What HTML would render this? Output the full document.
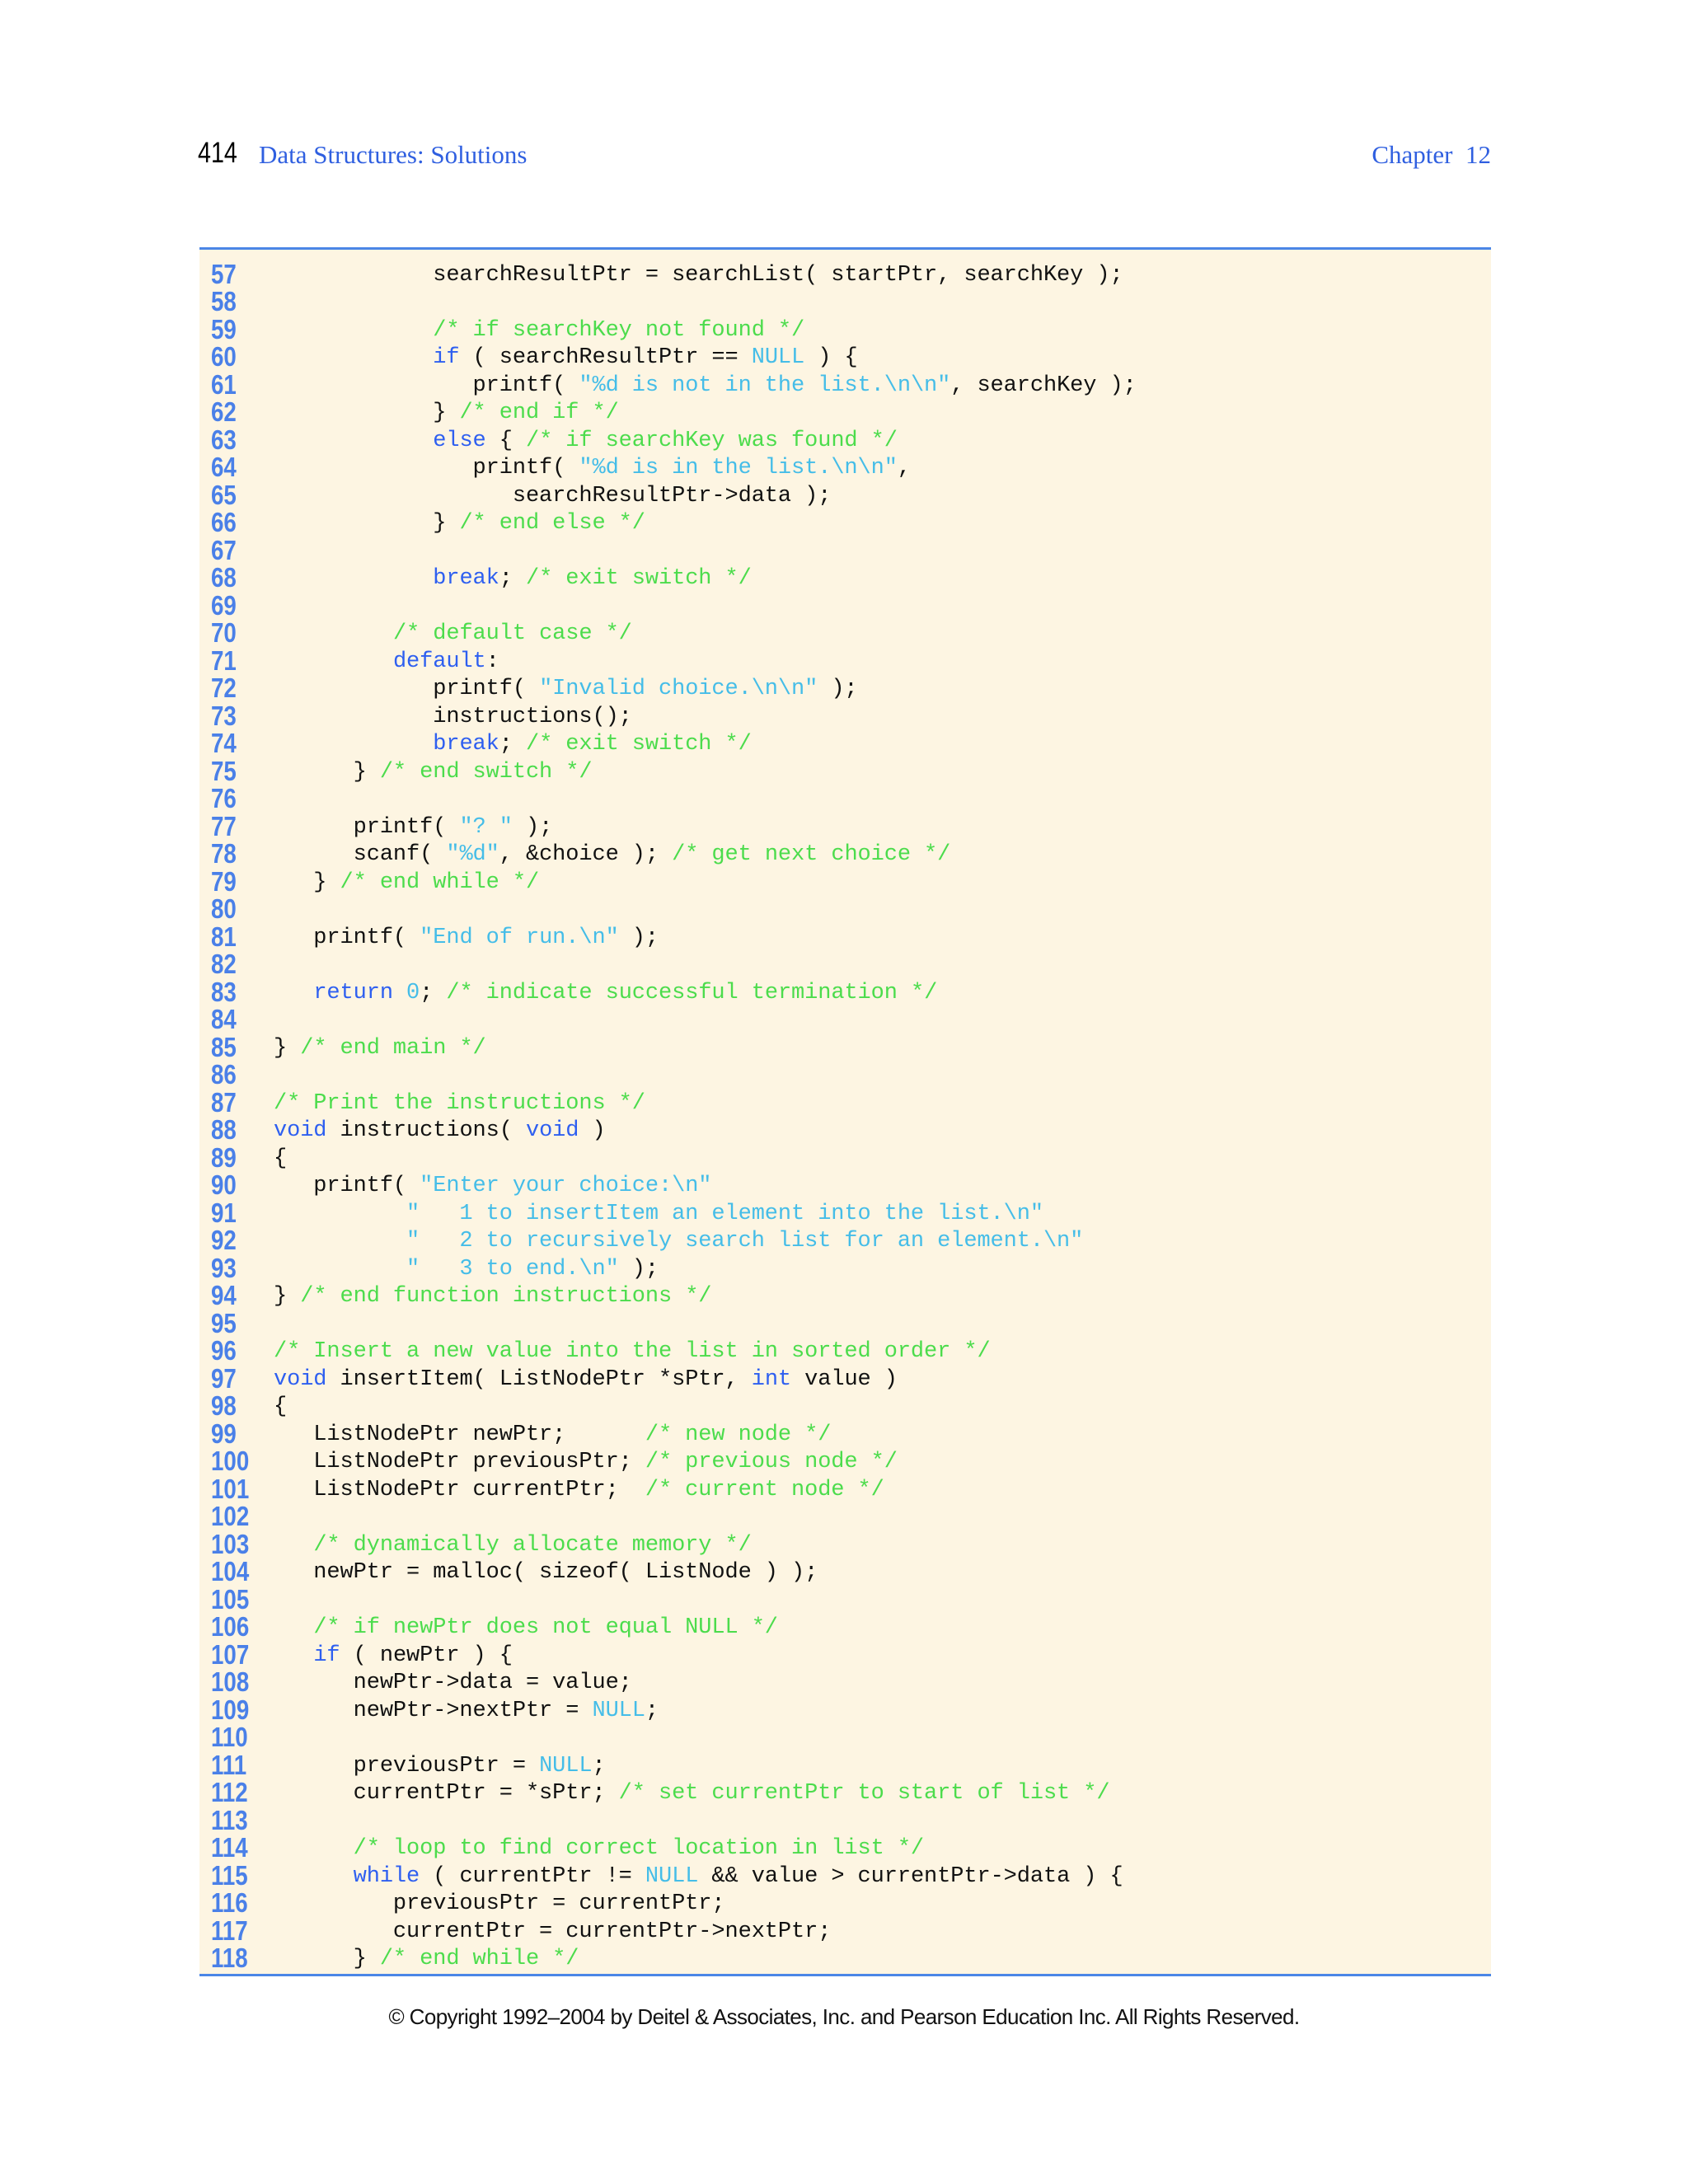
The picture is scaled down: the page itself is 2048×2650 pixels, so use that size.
<!DOCTYPE html>
<html><head><meta charset="utf-8"><style>
body{margin:0;width:2048px;height:2650px;background:#fff;position:relative;overflow:hidden}
.hdr{position:absolute;top:170px;font-family:"Liberation Serif",serif;font-size:31px;color:#2f5fe0}
.pn{position:absolute;left:240px;top:166px;font-family:"Liberation Sans",sans-serif;font-size:35px;color:#000;transform:scaleX(0.82);transform-origin:left}
.box{position:absolute;left:242px;top:300px;width:1567px;height:2098px;background:#fdf5e2;border-top:3px solid #4b86e6;border-bottom:3px solid #4b86e6;box-sizing:border-box}
.ln{position:absolute;left:256px;font-family:"Liberation Sans",sans-serif;font-weight:bold;font-size:33px;color:#4a80e8;transform:scaleX(0.84);transform-origin:left;line-height:33.5px}
.cd{position:absolute;left:332px;font-family:"Liberation Mono",monospace;font-size:27px;letter-spacing:-0.1px;white-space:pre;color:#111;line-height:33.5px}
.k{color:#2e5ff0}.s{color:#45bde8}.c{color:#4cdc4c}
.ft{position:absolute;top:2432px;left:0;width:2048px;text-align:center;font-family:"Liberation Sans",sans-serif;font-size:26px;color:#111;letter-spacing:-0.6px}
</style></head><body>
<div class="pn">414</div>
<div class="hdr" style="left:314px">Data Structures: Solutions</div>
<div class="hdr" style="right:239px">Chapter&nbsp; 12</div>
<div class="box"></div>
<div id="L"></div>
<div class="ft">© Copyright 1992–2004 by Deitel &amp; Associates, Inc. and Pearson Education Inc. All Rights Reserved.</div>
<script>
const lines=[
`            searchResultPtr = searchList( startPtr, searchKey );`,
``,
`            <c>/* if searchKey not found */</c>`,
`            <k>if</k> ( searchResultPtr == <s>NULL</s> ) {`,
`               printf( <s>"%d is not in the list.\\n\\n"</s>, searchKey );`,
`            } <c>/* end if */</c>`,
`            <k>else</k> { <c>/* if searchKey was found */</c>`,
`               printf( <s>"%d is in the list.\\n\\n"</s>,`,
`                  searchResultPtr->data );`,
`            } <c>/* end else */</c>`,
``,
`            <k>break</k>; <c>/* exit switch */</c>`,
``,
`         <c>/* default case */</c>`,
`         <k>default</k>:`,
`            printf( <s>"Invalid choice.\\n\\n"</s> );`,
`            instructions();`,
`            <k>break</k>; <c>/* exit switch */</c>`,
`      } <c>/* end switch */</c>`,
``,
`      printf( <s>"? "</s> );`,
`      scanf( <s>"%d"</s>, &amp;choice ); <c>/* get next choice */</c>`,
`   } <c>/* end while */</c>`,
``,
`   printf( <s>"End of run.\\n"</s> );`,
``,
`   <k>return</k> <s>0</s>; <c>/* indicate successful termination */</c>`,
``,
`} <c>/* end main */</c>`,
``,
`<c>/* Print the instructions */</c>`,
`<k>void</k> instructions( <k>void</k> )`,
`{`,
`   printf( <s>"Enter your choice:\\n"</s>`,
`<s>          "   1 to insertItem an element into the list.\\n"</s>`,
`<s>          "   2 to recursively search list for an element.\\n"</s>`,
`<s>          "   3 to end.\\n"</s> );`,
`} <c>/* end function instructions */</c>`,
``,
`<c>/* Insert a new value into the list in sorted order */</c>`,
`<k>void</k> insertItem( ListNodePtr *sPtr, <k>int</k> value )`,
`{`,
`   ListNodePtr newPtr;      <c>/* new node */</c>`,
`   ListNodePtr previousPtr; <c>/* previous node */</c>`,
`   ListNodePtr currentPtr;  <c>/* current node */</c>`,
``,
`   <c>/* dynamically allocate memory */</c>`,
`   newPtr = malloc( sizeof( ListNode ) );`,
``,
`   <c>/* if newPtr does not equal NULL */</c>`,
`   <k>if</k> ( newPtr ) {`,
`      newPtr->data = value;`,
`      newPtr->nextPtr = <s>NULL</s>;`,
``,
`      previousPtr = <s>NULL</s>;`,
`      currentPtr = *sPtr; <c>/* set currentPtr to start of list */</c>`,
``,
`      <c>/* loop to find correct location in list */</c>`,
`      <k>while</k> ( currentPtr != <s>NULL</s> &amp;&amp; value > currentPtr->data ) {`,
`         previousPtr = currentPtr;`,
`         currentPtr = currentPtr->nextPtr;`,
`      } <c>/* end while */</c>`];
let h='';
lines.forEach((l,i)=>{
 const t=317.5+i*33.5;
 const x=l.replace(/->/g,'-&gt;').replace(/ > /g,' &gt; ').replace(/<(\/?)([kcs])>/g,(m,a,b)=>a?'</span>':'<span class="'+b+'">');
 h+=`<div class="ln" style="top:${t-2}px">${57+i}</div><div class="cd" style="top:${t}px">${x}</div>`;
});
document.getElementById('L').innerHTML=h;
</script>
</body></html>
